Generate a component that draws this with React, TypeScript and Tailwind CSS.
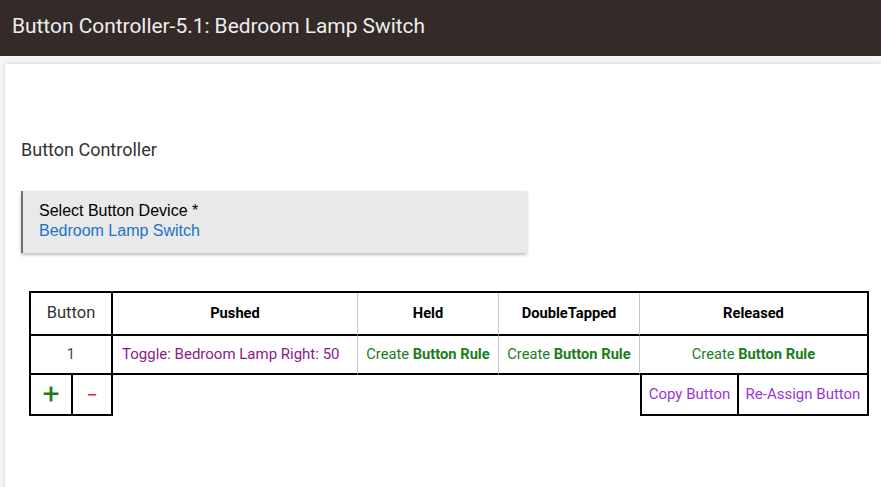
import React from "react";

const CreateRule = () => (
  <span className="text-[#1b7d1b]">
    Create <span className="font-bold">Button Rule</span>
  </span>
);

export default function App() {
  return (
    <div className="w-[881px] h-[487px] overflow-hidden bg-[#f5f5f5] font-['Roboto',sans-serif]">
      {/* header bar */}
      <div className="h-[56px] bg-[#342a27] flex items-center pl-[12px] pb-[3px]">
        <h1 className="text-[20.9px] text-[#eeeeee]">
          Button Controller-5.1: Bedroom Lamp Switch
        </h1>
      </div>

      {/* card */}
      <div className="ml-[5px] mt-[8px] h-[440px] bg-white rounded-tl-[2px] shadow-[0_0_4px_rgba(0,0,0,0.15)] pl-[16px] pt-[75px]">
        <p className="text-[18px] text-[#333] leading-[22px]">Button Controller</p>

        <div className="mt-[30px] w-[506px] h-[62px] bg-[#e9e9e9] border-l-[2px] border-[#707070] shadow-[0_2px_3px_rgba(0,0,0,0.25)] pl-[16px] pt-[10px] font-['Liberation_Sans',Arial,sans-serif] text-[16px] leading-[20px]">
          <div className="text-black">Select Button Device *</div>
          <div className="text-[#1a73c8]">Bedroom Lamp Switch</div>
        </div>

        {/* table */}
        <div className="mt-[38px] ml-[8px] w-[840px] grid grid-cols-[42px_40px_245px_141px_141px_99px_128px] border-t-2 border-x-2 border-black text-[14.7px]">
          {/* header row */}
          <div className="col-span-2 h-[43px] border-r-2 border-b-2 border-black flex items-center justify-center text-[16.5px] text-[#333]">
            Button
          </div>
          <div className="h-[43px] border-r border-b-2 border-r-[#c8c8c8] border-b-black flex items-center justify-center font-bold text-black">
            Pushed
          </div>
          <div className="h-[43px] border-r border-b-2 border-r-[#c8c8c8] border-b-black flex items-center justify-center font-bold text-black">
            Held
          </div>
          <div className="h-[43px] border-r border-b-2 border-r-[#c8c8c8] border-b-black flex items-center justify-center font-bold text-black">
            DoubleTapped
          </div>
          <div className="col-span-2 h-[43px] border-b-2 border-black flex items-center justify-center font-bold text-black">
            Released
          </div>

          {/* button 1 row */}
          <div className="col-span-2 h-[39px] border-r-2 border-b-2 border-black flex items-center justify-center text-[#444]">
            1
          </div>
          <div className="h-[39px] border-r border-b-2 border-r-[#c8c8c8] border-b-black flex items-center pl-[9px] text-[15px] text-[#8b1a89]">
            Toggle: Bedroom Lamp Right: 50
          </div>
          <div className="h-[39px] border-r border-b-2 border-r-[#c8c8c8] border-b-black flex items-center justify-center">
            <CreateRule />
          </div>
          <div className="h-[39px] border-r border-b-2 border-r-[#c8c8c8] border-b-black flex items-center justify-center">
            <CreateRule />
          </div>
          <div className="col-span-2 h-[39px] border-b-2 border-black flex items-center justify-center">
            <CreateRule />
          </div>

          {/* controls row */}
          <div className="h-[41px] -ml-[2px] w-[44px] border-l-2 border-r-2 border-b-2 border-black flex items-center justify-center text-[30px] leading-none text-[#1b7d1b] pb-[2px]">
            +
          </div>
          <div className="h-[41px] border-r-2 border-b-2 border-black flex items-center justify-center text-[20px] leading-none text-[#e8232a]">
            −
          </div>
          <div className="col-span-3 h-[41px]" />
          <div className="h-[41px] border-l-2 border-r-2 border-b-2 border-black flex items-center justify-center text-[15px] text-[#9a35d8] whitespace-nowrap">
            Copy Button
          </div>
          <div className="h-[41px] -mr-[2px] w-[130px] border-r-2 border-b-2 border-black flex items-center justify-center text-[15px] text-[#9a35d8] whitespace-nowrap">
            Re-Assign Button
          </div>
        </div>
      </div>
    </div>
  );
}
